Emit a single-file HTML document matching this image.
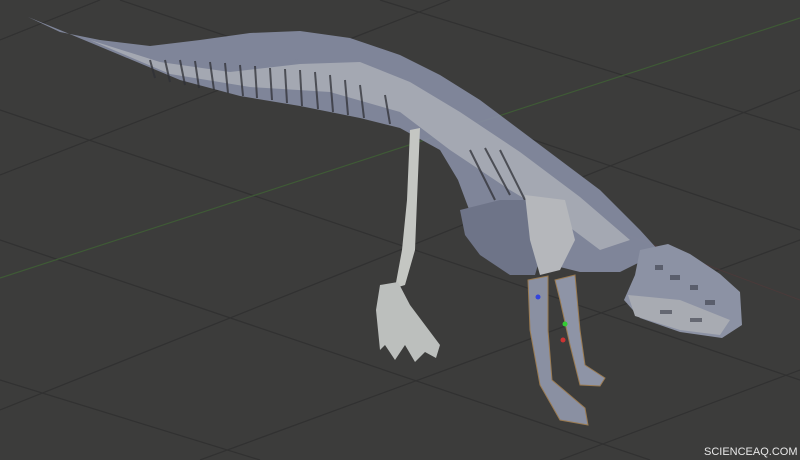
<!DOCTYPE html>
<html><head><style>
html,body{margin:0;padding:0;background:#3b3b3b;}
svg{display:block}
.t{font-family:"Liberation Sans",sans-serif;font-size:11px;fill:#e8e8e8;}
</style></head><body>
<svg width="800" height="460" viewBox="0 0 800 460">
<rect width="800" height="460" fill="#3c3c3b"/>
<g stroke="#313131" stroke-width="1.2" fill="none">
<line x1="0" y1="110" x2="800" y2="380"/>
<line x1="0" y1="240" x2="650" y2="460"/>
<line x1="0" y1="380" x2="260" y2="460"/>
<line x1="120" y1="0" x2="800" y2="230"/>
<line x1="380" y1="0" x2="800" y2="130"/>
<line x1="0" y1="175" x2="450" y2="0"/>
<line x1="0" y1="410" x2="800" y2="90"/>
<line x1="200" y1="460" x2="800" y2="240"/>
<line x1="560" y1="460" x2="800" y2="370"/>
<line x1="0" y1="40" x2="100" y2="0"/>
</g>
<line x1="0" y1="278" x2="800" y2="18" stroke="#3f5a36" stroke-width="1.2"/>
<line x1="560" y1="210" x2="800" y2="300" stroke="#4a3a3a" stroke-width="1"/>
<!-- tail + body -->
<path d="M28,17 L60,32 L100,40 L150,46 L200,40 L250,33 L300,31 L350,38 L400,55 L440,75 L480,100 L520,130 L560,160 L600,190 L640,230 L660,252 L640,262 L620,272 L580,272 L540,262 L500,235 L470,212 L458,180 L440,150 L400,128 L360,118 L300,106 L240,96 L180,80 L120,55 L60,30 Z" fill="#868ca2" opacity="0.92"/>
<path d="M90,40 L160,62 L230,72 L300,64 L360,62 L410,82 L460,112 L520,152 L580,197 L630,240 L600,250 L560,220 L510,190 L450,150 L400,112 L330,92 L250,87 L170,74 Z" fill="#a4a8b2"/>
<g stroke="#2f3036" stroke-width="2" opacity="0.75">
<line x1="150" y1="60" x2="155" y2="78"/><line x1="165" y1="60" x2="170" y2="82"/><line x1="180" y1="60" x2="185" y2="85"/><line x1="195" y1="61" x2="199" y2="88"/><line x1="210" y1="62" x2="214" y2="90"/><line x1="225" y1="63" x2="228" y2="93"/><line x1="240" y1="65" x2="243" y2="96"/><line x1="255" y1="66" x2="257" y2="98"/><line x1="270" y1="68" x2="272" y2="100"/><line x1="285" y1="69" x2="287" y2="103"/><line x1="300" y1="70" x2="302" y2="106"/><line x1="315" y1="72" x2="318" y2="109"/><line x1="330" y1="75" x2="333" y2="112"/><line x1="345" y1="80" x2="348" y2="115"/><line x1="360" y1="85" x2="364" y2="118"/><line x1="385" y1="95" x2="390" y2="124"/>
<line x1="470" y1="150" x2="495" y2="200"/><line x1="485" y1="148" x2="510" y2="195"/><line x1="500" y1="150" x2="525" y2="200"/>
</g>
<!-- chest dark -->
<path d="M460,210 L500,200 L535,200 L545,240 L535,275 L510,275 L480,255 L465,235 Z" fill="#6e7488"/>
<path d="M525,195 L565,200 L575,240 L560,270 L540,275 L530,240 Z" fill="#b5b7bb"/>
<!-- head -->
<path d="M640,250 L668,244 L690,254 L720,274 L740,292 L742,325 L722,338 L680,332 L640,318 L624,300 L635,275 Z" fill="#8c92a4"/>
<path d="M628,295 L680,300 L730,320 L720,335 L680,330 L635,316 Z" fill="#a8abb2"/>
<g fill="#3a3d48" opacity="0.6"><rect x="655" y="265" width="8" height="5"/><rect x="670" y="275" width="10" height="5"/><rect x="690" y="285" width="8" height="5"/><rect x="705" y="300" width="10" height="5"/><rect x="660" y="310" width="12" height="4"/><rect x="690" y="318" width="12" height="4"/></g>
<!-- front leg -->
<path d="M410,130 L420,128 L417,200 L415,250 L405,285 L395,288 L402,250 L407,200 Z" fill="#c4c6c2"/>
<path d="M380,285 L398,282 L410,305 L440,345 L436,358 L425,352 L415,362 L405,345 L395,360 L385,345 L380,350 L376,310 Z" fill="#bcbfbd"/>
<!-- hind legs -->
<path d="M528,280 L548,276 L548,330 L552,380 L585,408 L588,425 L560,420 L540,385 L530,330 Z" fill="#8a90a2" stroke="#9a7b52" stroke-width="1"/>
<path d="M555,280 L575,275 L580,330 L585,365 L605,378 L600,386 L580,385 L570,345 L560,300 Z" fill="#8e94a6" stroke="#9a7b52" stroke-width="1"/>
<circle cx="538" cy="297" r="2.5" fill="#3344dd"/>
<circle cx="565" cy="324" r="2.5" fill="#33cc33"/>
<circle cx="563" cy="340" r="2.5" fill="#cc3333"/>
<text class="t" x="704" y="455">SCIENCEAQ.COM</text>
</svg>
</body></html>
